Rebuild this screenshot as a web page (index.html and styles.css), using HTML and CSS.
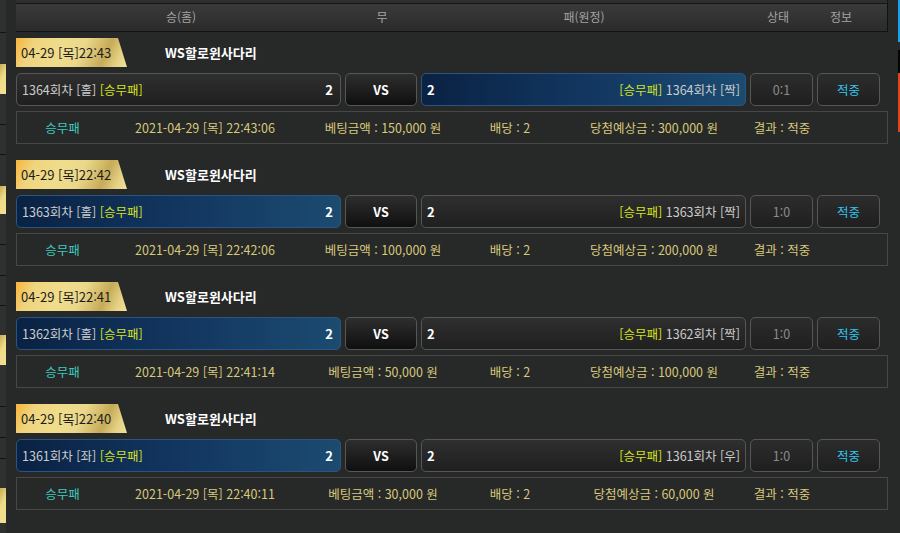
FILE: index.html
```html
<!DOCTYPE html>
<html lang="ko">
<head>
<meta charset="utf-8">
<title>베팅내역</title>
<link rel="stylesheet" href="styles.css">
</head>
<body>
<div class="page">
  <div class="side">
    <div class="seg h32 line"></div>
    <div class="seg h31"></div>
    <div class="seg gold h30"></div>
    <div class="seg h31 line"></div>
    <div class="seg h30 line"></div>
    <div class="seg h31"></div>
    <div class="seg gold h28"></div>
    <div class="seg h31 line"></div>
    <div class="seg h31 line"></div>
    <div class="seg h30 line"></div>
    <div class="seg h29"></div>
    <div class="seg gold h30"></div>
    <div class="seg h41 line"></div>
    <div class="seg h31 line"></div>
    <div class="seg h20 line"></div>
    <div class="seg h29"></div>
    <div class="seg gold h35"></div>
  </div>

  <div class="main">
    <div class="topband"></div>
    <div class="thead">
      <div class="th th-home">승(홈)</div>
      <div class="th th-draw">무</div>
      <div class="th th-away">패(원정)</div>
      <div class="th th-status">상태</div>
      <div class="th th-info">정보</div>
    </div>

    <div class="game game-first">
      <div class="game-head">
        <div class="badge">04-29 [목]22:43</div>
        <div class="game-title">WS할로윈사다리</div>
      </div>
      <div class="game-row">
        <div class="team home"><span>1364회차 [홀] <em class="pick">[승무패]</em></span><b class="score">2</b></div>
        <div class="vs">VS</div>
        <div class="team away picked"><b class="score">2</b><span><em class="pick">[승무패]</em> 1364회차 [짝]</span></div>
        <div class="cell status">0:1</div>
        <div class="cell info">적중</div>
      </div>
      <div class="bet">
        <div class="bc b1 kind">승무패</div>
        <div class="bc b2">2021-04-29 [목] 22:43:06</div>
        <div class="bc b3">베팅금액 : 150,000 원</div>
        <div class="bc b4">배당 : 2</div>
        <div class="bc b5">당첨예상금 : 300,000 원</div>
        <div class="bc b6">결과 : 적중</div>
      </div>
    </div>

    <div class="game">
      <div class="game-head">
        <div class="badge">04-29 [목]22:42</div>
        <div class="game-title">WS할로윈사다리</div>
      </div>
      <div class="game-row">
        <div class="team home picked"><span>1363회차 [홀] <em class="pick">[승무패]</em></span><b class="score">2</b></div>
        <div class="vs">VS</div>
        <div class="team away"><b class="score">2</b><span><em class="pick">[승무패]</em> 1363회차 [짝]</span></div>
        <div class="cell status">1:0</div>
        <div class="cell info">적중</div>
      </div>
      <div class="bet">
        <div class="bc b1 kind">승무패</div>
        <div class="bc b2">2021-04-29 [목] 22:42:06</div>
        <div class="bc b3">베팅금액 : 100,000 원</div>
        <div class="bc b4">배당 : 2</div>
        <div class="bc b5">당첨예상금 : 200,000 원</div>
        <div class="bc b6">결과 : 적중</div>
      </div>
    </div>

    <div class="game">
      <div class="game-head">
        <div class="badge">04-29 [목]22:41</div>
        <div class="game-title">WS할로윈사다리</div>
      </div>
      <div class="game-row">
        <div class="team home picked"><span>1362회차 [홀] <em class="pick">[승무패]</em></span><b class="score">2</b></div>
        <div class="vs">VS</div>
        <div class="team away"><b class="score">2</b><span><em class="pick">[승무패]</em> 1362회차 [짝]</span></div>
        <div class="cell status">1:0</div>
        <div class="cell info">적중</div>
      </div>
      <div class="bet">
        <div class="bc b1 kind">승무패</div>
        <div class="bc b2">2021-04-29 [목] 22:41:14</div>
        <div class="bc b3">베팅금액 : 50,000 원</div>
        <div class="bc b4">배당 : 2</div>
        <div class="bc b5">당첨예상금 : 100,000 원</div>
        <div class="bc b6">결과 : 적중</div>
      </div>
    </div>

    <div class="game">
      <div class="game-head">
        <div class="badge">04-29 [목]22:40</div>
        <div class="game-title">WS할로윈사다리</div>
      </div>
      <div class="game-row">
        <div class="team home picked"><span>1361회차 [좌] <em class="pick">[승무패]</em></span><b class="score">2</b></div>
        <div class="vs">VS</div>
        <div class="team away"><b class="score">2</b><span><em class="pick">[승무패]</em> 1361회차 [우]</span></div>
        <div class="cell status">1:0</div>
        <div class="cell info">적중</div>
      </div>
      <div class="bet">
        <div class="bc b1 kind">승무패</div>
        <div class="bc b2">2021-04-29 [목] 22:40:11</div>
        <div class="bc b3">베팅금액 : 30,000 원</div>
        <div class="bc b4">배당 : 2</div>
        <div class="bc b5">당첨예상금 : 60,000 원</div>
        <div class="bc b6">결과 : 적중</div>
      </div>
    </div>
  </div>

  <div class="rstrip">
    <div class="rs blue"></div>
    <div class="rs black"></div>
    <div class="rs red"></div>
  </div>
</div>
</body>
</html>
```

FILE: styles.css
```css
* { box-sizing: border-box; }

html, body {
  margin: 0;
  padding: 0;
}

body {
  background: #272828;
  font-family: "Noto Sans CJK KR", "Noto Sans", sans-serif;
  font-size: 12.5px;
  line-height: 16px;
  color: #cfcfcf;
  overflow: hidden;
}

.page {
  display: flex;
  width: 900px;
  height: 533px;
}

/* left sliver of neighbouring panel */
.side {
  width: 6px;
  flex: none;
  background: #2f3030;
  display: flex;
  flex-direction: column;
}
.seg { flex: none; }
.seg.line { border-bottom: 1px solid #141414; }
.seg.gold {
  background: linear-gradient(120deg, #c9ad55 0%, #efdc8a 45%, #f1e08e 100%);
}
.h20 { height: 21px; }
.h28 { height: 28px; }
.h29 { height: 29px; }
.h30 { height: 30px; }
.h31 { height: 31px; }
.h32 { height: 33px; }
.h35 { height: 35px; }
.h41 { height: 42px; }

/* main column */
.main {
  width: 872px;
  flex: none;
  margin-left: 10px;
}

.topband {
  height: 4px;
  background: #2f2f2f;
  border-bottom: 1px solid #161616;
  border-right: 1px solid #161616;
}

.thead {
  height: 28px;
  display: flex;
  background: linear-gradient(#3a3a3a, #2b2b2b);
  border-bottom: 1px solid #121212;
  border-right: 1px solid #121212;
  color: #a3a3a3;
  font-size: 12px;
  line-height: 26px;
}
.th { text-align: center; flex: none; }
.th-home { width: 330px; }
.th-draw { width: 72px; }
.th-away { width: 332px; }
.th-status { width: 56px; }
.th-info { width: 70px; }

.game { margin-top: 16px; }
.game.game-first { margin-top: 6px; }

.game-head {
  display: flex;
  align-items: center;
  height: 29px;
}

.badge {
  width: 111px;
  height: 29px;
  padding-left: 5px;
  clip-path: polygon(0 0, 102px 0, 111px 100%, 0 100%);
  background: linear-gradient(115deg, #f6b53b 0%, #f0d47e 16%, #efdd8c 40%, #ead78a 58%, #c6ab58 78%, #e5d184 90%, #f2e19a 100%);
  color: #1c1c1c;
  font-size: 13px;
  line-height: 29px;
  white-space: nowrap;
}

.game-title {
  margin-left: 38px;
  color: #ffffff;
  font-weight: 700;
  font-size: 13px;
}

.game-row {
  display: flex;
  gap: 4px;
  margin-top: 6px;
  height: 33px;
}

.team {
  width: 325px;
  flex: none;
  border: 1px solid #565656;
  border-radius: 5px;
  background: linear-gradient(#2f2f2f, #1f1f1f);
  display: flex;
  align-items: center;
  justify-content: space-between;
  color: #cccccc;
  white-space: nowrap;
}
.team.home { padding: 0 7px 0 5px; }
.team.away { padding: 0 5px 0 5px; }
.team.picked {
  background: linear-gradient(90deg, #0a2243 0%, #123660 50%, #1c4b70 100%);
  border-color: #2a5583;
}

.score {
  color: #ffffff;
  font-weight: 700;
  font-size: 13px;
}

.pick {
  font-style: normal;
  color: #d3e01c;
}

.vs {
  width: 72px;
  flex: none;
  border: 1px solid #565656;
  border-radius: 5px;
  background: linear-gradient(#2e2e2e, #0f0f0f);
  color: #ffffff;
  font-weight: 700;
  display: flex;
  align-items: center;
  justify-content: center;
}

.cell {
  width: 63px;
  flex: none;
  border: 1px solid #565656;
  border-radius: 5px;
  background: linear-gradient(#2c2c2c, #1f1f1f);
  display: flex;
  align-items: center;
  justify-content: center;
}
.status { color: #8b8b8b; }
.info { color: #2ec5ee; }

.bet {
  display: flex;
  align-items: center;
  margin-top: 5px;
  height: 33px;
  border: 1px solid #474747;
  color: #d8c87a;
  white-space: nowrap;
}
.bc { flex: none; text-align: center; }
.b1 { width: 91px; }
.b2 { width: 194px; }
.b3 { width: 162px; }
.b4 { width: 92px; }
.b5 { width: 196px; }
.b6 { width: 60px; }
.kind { color: #3ec7bd; }

/* right edge sliver */
.rstrip {
  margin-left: auto;
  width: 2px;
  flex: none;
  display: flex;
  flex-direction: column;
}
.rs { flex: none; }
.rs.blue { height: 42px; background: #1d9ff0; }
.rs.black { height: 23px; margin-top: 8px; background: #050505; }
.rs.red { height: 59px; background: #e5421d; }
```
